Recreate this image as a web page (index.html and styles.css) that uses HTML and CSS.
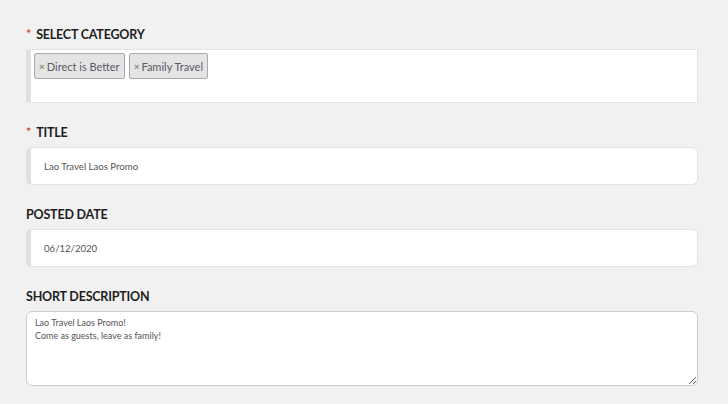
FILE: index.html
```html
<!DOCTYPE html>
<html lang="en">
<head>
    <meta charset="UTF-8">
    <meta name="viewport" content="width=device-width, initial-scale=1.0">
    <title>Edit Post</title>
    <link rel="stylesheet" href="styles.css">
</head>
<body>
    <form class="post-form">
        <div class="form-group">
            <label class="required">Select Category</label>
            <div class="tag-select">
                <span class="tag"><span class="tag-remove">×</span>Direct is Better</span>
                <span class="tag"><span class="tag-remove">×</span>Family Travel</span>
            </div>
        </div>
        <div class="form-group">
            <label class="required" for="title">Title</label>
            <input type="text" id="title" class="text-input" value="Lao Travel Laos Promo">
        </div>
        <div class="form-group">
            <label for="posted-date">Posted Date</label>
            <input type="text" id="posted-date" class="text-input" value="06/12/2020">
        </div>
        <div class="form-group">
            <label for="short-desc">Short Description</label>
            <textarea id="short-desc" class="text-area">Lao Travel Laos Promo!
Come as guests, leave as family!</textarea>
        </div>
    </form>
</body>
</html>
```

FILE: styles.css
```css
body {
    font-family: Lato, 'Open Sans', sans-serif;
    background-color: #f1f1f1;
    color: #222;
    margin: 0;
    padding: 0;
}

.post-form {
    padding: 27px 30px 0 26px;
}

.form-group {
    margin-bottom: 22px;
}

label {
    display: block;
    font-size: 12.5px;
    line-height: 16px;
    font-weight: bold;
    text-transform: uppercase;
    letter-spacing: -0.2px;
    color: #1e1e1e;
    margin-bottom: 6px;
}

    label.required::before {
        content: '*';
        color: #e02020;
        margin-right: 5px;
        font-weight: normal;
    }

.tag-select {
    display: flex;
    flex-wrap: wrap;
    align-items: flex-start;
    gap: 4px;
    height: 54px;
    box-sizing: border-box;
    padding: 3px 3px;
    background-color: #fff;
    border: 1px solid #e4e4e4;
    border-left: 5px solid #e0e0e0;
    border-radius: 2px;
}

.tag {
    display: inline-flex;
    align-items: center;
    height: 26px;
    box-sizing: border-box;
    padding: 0 4px;
    background-color: #e4e4e4;
    border: 1px solid #aaa;
    border-radius: 2px;
    font-size: 11px;
    color: #5c5a66;
}

.tag-remove {
    color: #888;
    font-weight: bold;
    font-size: 10px;
    margin-right: 2px;
}

.text-input {
    display: block;
    width: 100%;
    height: 38px;
    box-sizing: border-box;
    padding: 0 13px;
    background-color: #fff;
    border: 1px solid #e4e4e4;
    border-left: 5px solid #e0e0e0;
    border-radius: 6px;
    font-family: inherit;
    font-size: 9.6px;
    color: #555;
    outline: none;
}

.text-area {
    display: block;
    width: 100%;
    height: 75px;
    box-sizing: border-box;
    padding: 4px 8px;
    background-color: #fff;
    border: 1px solid #ccc;
    border-radius: 6px;
    font-family: inherit;
    font-size: 9px;
    line-height: 13px;
    color: #555;
    outline: none;
}
```
